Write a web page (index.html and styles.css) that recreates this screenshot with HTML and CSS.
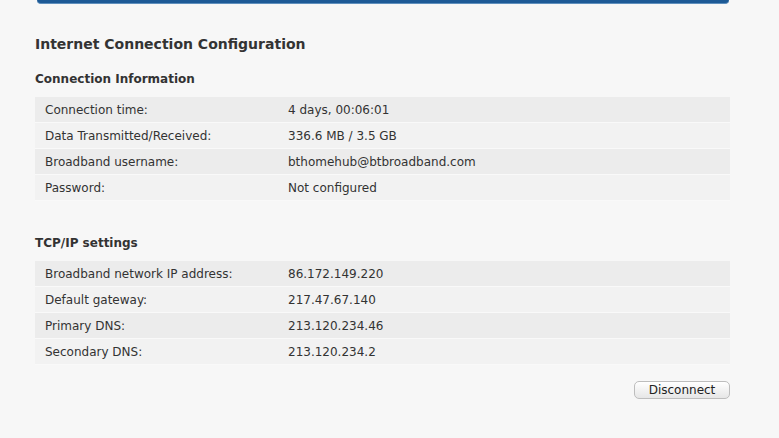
FILE: index.html
```html
<!DOCTYPE html>
<html lang="en">
<head>
<meta charset="UTF-8" />
<meta name="viewport" content="width=device-width, initial-scale=1" />
<title>Internet Connection Configuration</title>
<link rel="stylesheet" href="styles.css">
</head>
<body>

<div class="topbar"></div>

<div class="page">
  <h1>Internet Connection Configuration</h1>

  <h2>Connection Information</h2>
  <table class="info">
    <tr><td class="label">Connection time:</td><td>4 days, 00:06:01</td></tr>
    <tr><td class="label">Data Transmitted/Received:</td><td>336.6 MB / 3.5 GB</td></tr>
    <tr><td class="label">Broadband username:</td><td>bthomehub@btbroadband.com</td></tr>
    <tr><td class="label">Password:</td><td>Not configured</td></tr>
  </table>

  <h2 class="second">TCP/IP settings</h2>
  <table class="info">
    <tr><td class="label">Broadband network IP address:</td><td>86.172.149.220</td></tr>
    <tr><td class="label">Default gateway:</td><td>217.47.67.140</td></tr>
    <tr><td class="label">Primary DNS:</td><td>213.120.234.46</td></tr>
    <tr><td class="label">Secondary DNS:</td><td>213.120.234.2</td></tr>
  </table>

  <div class="actions">
    <button class="btn">Disconnect</button>
  </div>
</div>

</body>
</html>
```

FILE: styles.css
```css
body {
  margin: 0;
  background: #f7f7f7;
  font-family: "DejaVu Sans", Verdana, sans-serif;
  color: #333;
}
.topbar {
  margin: 0 50px 0 37px;
  height: 3px;
  background: #1d5a96;
  border-bottom: 1px solid #5f8fbd;
  border-radius: 0 0 4px 4px;
}
.page {
  width: 695px;
  margin-left: 35px;
}
h1 {
  font-size: 14px;
  font-weight: bold;
  margin: 30px 0 0;
  line-height: 20px;
}
h2 {
  font-size: 12px;
  font-weight: bold;
  margin: 16px 0 9px;
  line-height: 18px;
}
h2.second {
  margin-top: 33px;
}
table.info {
  width: 100%;
  border-collapse: collapse;
  font-size: 12px;
}
table.info td {
  height: 25px;
  padding: 0 0 0 10px;
  border-bottom: 1px solid #f9f9f9;
  color: #333;
}
table.info td.label {
  width: 233px;
}
table.info tr:nth-child(odd) td {
  background: #ececec;
}
table.info tr:nth-child(even) td {
  background: #f2f2f2;
}
.actions {
  display: flex;
  justify-content: flex-end;
  margin-top: 16px;
}
.btn {
  font-family: "DejaVu Sans", Verdana, sans-serif;
  font-size: 12px;
  color: #222;
  height: 18px;
  width: 96px;
  padding: 0;
  border: 1px solid #bdbdbd;
  border-radius: 5px;
  background: linear-gradient(#ffffff, #e6e6e6);
  cursor: pointer;
}
```
